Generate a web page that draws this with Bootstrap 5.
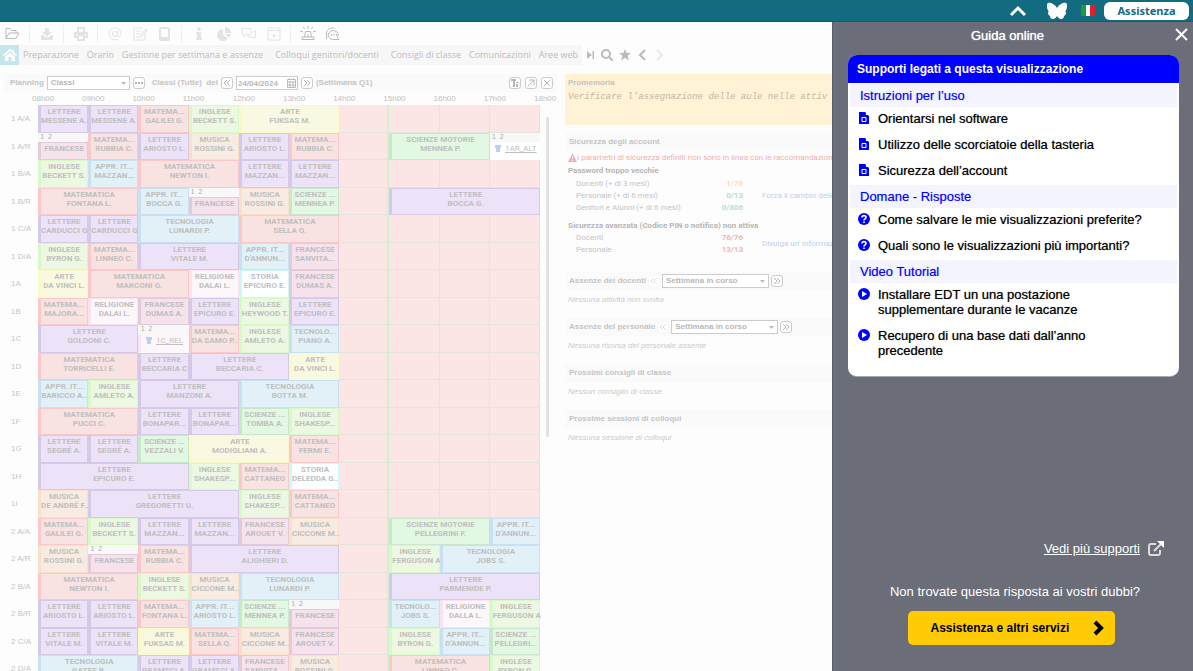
<!DOCTYPE html>
<html lang="it">
<head>
<meta charset="utf-8">
<meta name="viewport" content="width=device-width, initial-scale=1">
<title>EDT - Planning classi</title>
<link href="https://cdn.jsdelivr.net/npm/bootstrap@5.3.0/dist/css/bootstrap.min.css" rel="stylesheet">
<style>
body{font-family:"Liberation Sans",Arial,sans-serif;font-size:8px;line-height:12px;color:#c4c4c4;background:#fdfdfd}
svg{display:block;flex:none}
button,select,input{font:inherit;color:inherit}
.topbar{height:22px;background:#136b80;border-bottom:1px solid #0d6074;color:#fff}
.topbar button{padding:0;border:0;background:none}
.topbar .fold{margin-right:20px}
.topbar .help-btn{width:85px;height:18px;border-radius:6px;background:#fff;color:#136b80;font:bold 11px/16px "Noto Sans","Open Sans",sans-serif}
.workspace{min-width:0}
.toolbar{height:23px;gap:8px;color:#e3e3e3}
.toolbar button{border:0;background:none;padding:0;width:17px;color:inherit;display:flex;justify-content:center}
.toolbar .on{color:#bbb}
.toolbar hr{width:1px;height:18px;margin:0;border:0;background:#eee;opacity:1}
.menu{height:20px;font:9px/20px "Open Sans","Noto Sans",sans-serif}
.menu a{color:#bcbcbc;text-decoration:none;white-space:nowrap}
.menu .tabs{background:#f7f7f7;padding:0 4px;gap:8px}
.menu .wide{margin-right:4px}
.menu .home{width:19px;background:#c5e6ed;color:#fff}
.menu .tools{gap:6px;padding-left:5px}
.menu button{border:0;background:none;padding:0;color:#bbb}
.menu .off{color:#e8e8e8}
.content-area{padding-top:9px}
.planning{flex:565 1 0;min-width:0}
.board{flex:267 1 0;min-width:0;white-space:nowrap}
.bar{height:18px;gap:2px;background:#fafafa;font-weight:bold}
.planning .bar{padding-left:6px;gap:3px}
.bar select,.bar input{height:14px;border:1px solid #ccc;border-radius:0;background:#fff;padding:0 3px;font-weight:bold;color:#b8b8b8;appearance:none;outline:0}
.pick{position:relative;width:107px}
.pick.small-pick{width:83px}
.pick select{width:100%;display:block}
.pick svg{position:absolute;right:4px;top:6px;pointer-events:none}
.date{position:relative;width:62px}
.date input{width:100%;display:block;padding:0 1px}
.date svg{position:absolute;right:2px;top:2px}
.sq{width:12px;height:12px;border:1px solid #ccc!important;border-radius:3px;background:#fff;padding:0;color:#b5b5b5;display:flex;align-items:center;justify-content:center;flex:none}
.ghost{border-color:#f7f7f7!important;color:#ddd}
/* timetable */
.timetable{table-layout:fixed;border-collapse:separate;border-spacing:0;width:100%}
.timetable th,.timetable td{padding:0;font-weight:normal}
.timetable thead th{height:13px;line-height:13px;white-space:nowrap;overflow:visible}
.timetable thead span{margin-left:-6px;color:#c0c0c0}
.timetable tbody tr{height:28px}
.timetable tbody tr:nth-child(even){height:27px}
.timetable tbody th{padding-left:11px;color:#c6c6c6;vertical-align:middle}
.free{background:#fbe5e5;border-right:1px solid #e3e5dc;border-bottom:1px solid #e3e5dc}
.free.edge{border-right:2px solid #cff3cf}
.lesson{position:relative;vertical-align:top}
.slot{position:absolute;inset:0;border:1px solid var(--l);border-left:3px solid var(--l);background:var(--b);font:bold 8px/9px Roboto,sans-serif;color:#bfbfbf;text-align:center;white-space:nowrap;padding-top:1px}
.slot.grp{top:9px}
.slot.cls{font-weight:normal;border-color:transparent;border-left-color:var(--l);text-decoration:underline}
.parts{height:9px;background:#f8f8f8;font:7px/9px "DejaVu Sans",sans-serif;color:#b0b0b0;padding-left:2px}
.parts i{font-style:normal;padding-right:1px}
.lett{--b:#ece3f8;--l:#d4cae7}.mate{--b:#f8e2e2;--l:#fac8c8}.ingl{--b:#edf8e2;--l:#d9f8c8}
.arte{--b:#f9f9e2;--l:#fafac8}.fran{--b:#f6e2ec;--l:#e3cad8}.musi{--b:#f8ece2;--l:#fae0c8}
.tecn{--b:#e2f0f8;--l:#c8e0f0}.scie{--b:#e2f8e2;--l:#cae6cc}.reli{--b:#fdf7fb;--l:#fae2f0}
.stor{--b:#fcffff;--l:#cdf8f8}.altr,.\+alt{--b:#fff;--l:#fff}
.gutter{vertical-align:top;padding:12px 0 0 6px!important}
.thumb{width:3px;height:320px;background:#e2e2e2;border-radius:2px}
/* dashboard */
.memo{height:51px;background:#fff2d5;padding:2px 0 0 3px}
.memo p{font:italic 9px/14px "Liberation Mono",monospace;color:#bfb8a6}
.memo h2,.bar h2{font-size:8px;line-height:14px;font-weight:bold;margin:0}
.board .note{font-style:italic;line-height:12px;margin:4px 0 12px;padding-left:3px;color:#cbcbcb}
.warn{color:#f0aeb0;line-height:13px;font-family:Roboto,sans-serif;padding-left:3px}
.sec{width:100%;table-layout:fixed;border-collapse:collapse;margin-left:3px}
.sec th,.sec td{padding:0;line-height:12px;height:12px;font-weight:normal;font-family:Roboto,sans-serif}
.sec .cap-row th{font-weight:bold;color:#b5b5b5;height:14px}
.sec .cap-row .next{padding-top:6px}
.sec .act{padding-left:19px}
.sec a{color:#bccdf3;text-decoration:none}
.sec .num{text-align:right;font-weight:bold;color:#f0b4b4}
.sec .mid{color:#fbdcae}
.sec .ok{color:#b9e0cf}
/* guide */
.guide{flex:0 0 361px;background:#6b6e78;border-left:1px solid #5c5f70;color:#fff;font-size:13px;line-height:15px}
.guide h1{font-size:13px;line-height:15px;margin:0;padding:6px 11px 0 0;text-shadow:0 0 1px #fff}
.guide .closer{position:absolute;right:5px;top:6px;border:0;background:none;padding:0;color:#fff}
.guide .panel-card{margin:12px 14px 0 15px;padding-bottom:11px;background:#fff;border-radius:9px;overflow:hidden;border-bottom:1px solid #aaa;color:#000}
.guide h2{background:#00f;color:#fff;font-size:12px;font-weight:bold;line-height:28px;margin:0 0 1px;padding-left:9px}
.guide h3{background:#f4f4ff;color:#00f;font-size:13px;line-height:23px;margin:0 2px;padding-left:10px;text-shadow:0 0 1px #99f}
.guide li{padding:4px 0 7px 10px;gap:8px}
.guide li a{color:#000;text-decoration:none;text-shadow:0 0 1px #777}
.guide li svg{color:#00f;margin-top:1px}
.guide .all{padding-right:29px}
.guide .more{color:#fff}
.guide .foot{padding:0 4px 26px 0}
.guide .cta{width:207px;height:34px;border:0;border-radius:5px;background:#ffcb05;color:#000;font-size:12px;font-weight:bold;padding:0 10px 0 23px}
</style>
</head>
<body class="vh-100 d-flex flex-column overflow-hidden">

<header class="topbar d-flex align-items-center justify-content-end flex-shrink-0 pe-1">
  <button aria-label="Riduci" class="fold"><svg width="16" height="12" viewBox="0 0 16 12" fill="none" stroke="currentColor" stroke-width="3"><path d="M1 10l7-7 7 7"/></svg></button>
  <button aria-label="Bluesky"><svg width="22" height="18" viewBox="0 0 22 18" fill="currentColor"><path d="M11 6C9 2 4 0 2 1 0 2 1 8 3 10c-2 0-1 3 1 4 0 3 4 5 7 0 3 5 7 3 7 0 2-1 3-4 1-4 2-2 3-8 1-9-2-1-7 1-9 5z"/></svg></button>
  <button aria-label="Italiano" class="mx-2 ps-1"><svg width="16" height="11" viewBox="0 0 16 11"><path fill="#fff" d="M1 0h14v11H1z"/><path fill="#1c9a3c" d="M1 0h5v11H1z"/><path fill="#dd2030" d="M10 0h5v11h-5z"/></svg></button>
  <button class="help-btn">Assistenza</button>
</header>

<div class="d-flex flex-fill overflow-hidden">
<main class="workspace flex-fill overflow-hidden d-flex flex-column">

  <div class="toolbar d-flex align-items-center flex-shrink-0 ps-1">
    <button class="on" aria-label="Apri"><svg width="15" height="13" viewBox="0 0 15 13" fill="none" stroke="currentColor"><path d="M1 11V1.500h4l1.500 2H11V6M1 11.500L4 6h10l-3 5.500z"/></svg></button>
    <hr>
    <button aria-label="Importa"><svg width="16" height="14" viewBox="0 0 16 14" fill="currentColor"><path d="M6 1h4v4h3L8 9.500 3 5h3zM2 8h2l2 2h4l2-2h2v5H2z"/></svg></button>
    <hr>
    <button aria-label="Stampa"><svg width="14" height="14" viewBox="0 0 14 14" fill="none" stroke="currentColor" stroke-width="2"><path d="M4 5V1h6v4M3 10H1V6h12v4h-2M4 8h6v5H4z"/></svg></button>
    <hr>
    <button aria-label="E-mail"><svg width="16" height="16" viewBox="0 0 16 16" fill="none" stroke="currentColor"><circle cx="8" cy="8" r="2.500"/><path d="M10.500 5v4.500c0 2 3.500 1 3.500-2A6 6 0 1 0 11 13"/></svg></button>
    <button aria-label="Lettere"><svg width="16" height="14" viewBox="0 0 16 14" fill="none" stroke="currentColor"><path d="M13 6v7H2V1h8M4 4h5M4 7h4M4 10h6M9 8l5-6 1 1-5 6z"/></svg></button>
    <button aria-label="SMS"><svg width="11" height="14" viewBox="0 0 11 14" fill="none" stroke="currentColor" stroke-width="2"><rect x="1" y="1" width="9" height="12" rx="1"/><path d="M1 11h9"/></svg></button>
    <hr>
    <button aria-label="Informazioni"><svg width="8" height="14" viewBox="0 0 8 14" fill="currentColor"><circle cx="4" cy="2" r="2"/><path d="M1 5h5v6h1v2H1v-2h1V7H1z"/></svg></button>
    <button aria-label="Statistiche"><svg width="14" height="14" viewBox="0 0 14 14" fill="currentColor"><path d="M6 2v6l5 3.500A6 6 0 1 1 6 2zM8 0a6 6 0 0 1 6 6H8zM8 7h6l-2 4z"/></svg></button>
    <button aria-label="Messaggi"><svg width="16" height="14" viewBox="0 0 16 14" fill="none" stroke="currentColor"><path d="M1 1.500h9v6H5l-2 2v-2H1zM12 4h2.500v6H13v2l-2-2H7V8"/></svg></button>
    <button aria-label="Agenda"><svg width="14" height="14" viewBox="0 0 14 14" fill="none" stroke="currentColor"><path d="M1 1h12v12H1zM1 3.500h12"/><path d="M7 7v3" stroke-width="2"/></svg></button>
    <hr>
    <button class="on" aria-label="Allarme"><svg width="16" height="15" viewBox="0 0 16 15" fill="none" stroke="currentColor"><path d="M4.500 11l1-5.500h5l1 5.500M2 11h12v2.500H2zM8 8v3M8 0v3M3 1l2 2M13 1l-2 2M0 5l3 1M16 5l-3 1"/></svg></button>
    <button class="on" aria-label="Discussioni"><svg width="16" height="14" viewBox="0 0 16 14" fill="none" stroke="currentColor"><path d="M14 12.500l-1.500-2A5 4.500 0 1 0 9 12.500zM1.500 12V6A6 5 0 0 1 10 1.500"/><path d="M6 8h1M8.500 8h1M11 8h1" stroke-width="2"/></svg></button>
  </div>

  <nav class="menu d-flex align-items-center flex-shrink-0">
    <a href="#" class="home h-100 d-flex align-items-center justify-content-center flex-shrink-0" aria-label="Home"><svg width="14" height="12" viewBox="0 0 14 12" fill="currentColor"><path d="M7 0L0 6l1 1 6-5 6 5 1-1-3-2.500V1H9.500v1zM2 7.500L7 3.500l5 4V12H8.500V8h-3v4H2z"/></svg></a>
    <div class="tabs d-flex h-100">
      <a href="#">Preparazione</a><a href="#">Orario</a><a href="#" class="wide">Gestione per settimana e assenze</a><a href="#" class="wide">Colloqui genitori/docenti</a><a href="#">Consigli di classe</a><a href="#">Comunicazioni</a><a href="#">Aree web</a>
    </div>
    <div class="tools d-flex align-items-center">
    <button aria-label="Ultimo"><svg width="8" height="8" viewBox="0 0 8 8" fill="currentColor"><path d="M0 0l5 4-5 4zM5.500 0H7v8H5.500z"/></svg></button>
    <button aria-label="Cerca"><svg width="12" height="12" viewBox="0 0 12 12" fill="none" stroke="currentColor" stroke-width="2"><circle cx="5" cy="5" r="4"/><path d="M8 8l4 4"/></svg></button>
    <button aria-label="Preferiti"><svg width="12" height="12" viewBox="0 0 12 12" fill="currentColor"><path d="M6 0l1.700 4H12L8.600 6.800 10 11.500 6 8.700 2 11.500l1.400-4.700L0 4h4.300z"/></svg></button>
    <button aria-label="Indietro"><svg width="11" height="12" viewBox="0 0 11 12" fill="none" stroke="currentColor" stroke-width="2"><path d="M8 1L3 6l5 5"/></svg></button>
    <button class="off" aria-label="Avanti"><svg width="11" height="12" viewBox="0 0 11 12" fill="none" stroke="currentColor" stroke-width="2"><path d="M3 1l5 5-5 5"/></svg></button>
    </div>
  </nav>

  <div class="content-area d-flex flex-fill overflow-hidden">
    <section class="planning overflow-hidden">
      <div class="bar d-flex align-items-center ms-1 me-2 text-nowrap">
        <label for="vista">Planning</label>
        <span class="pick small-pick"><select id="vista"><option>Classi</option></select><svg width="5" height="3" viewBox="0 0 5 3" fill="#bbb"><path d="M0 0h5L2.500 3z"/></svg></span>
        <button class="sq" aria-label="Altro"><svg width="8" height="2" viewBox="0 0 8 2" fill="currentColor"><path d="M0 0h2v2H0zM3 0h2v2H3zM6 0h2v2H6z"/></svg></button>
        <label for="giorno" class="ps-1">Classi (Tutte)&nbsp; del</label>
        <button class="sq" aria-label="Precedente"><svg width="8" height="6" viewBox="0 0 8 6" fill="none" stroke="currentColor"><path d="M4 0L1 3l3 3M7 0L4 3l3 3"/></svg></button>
        <span class="date"><input id="giorno" value="24/04/2024"><svg width="9" height="10" viewBox="0 0 9 10" fill="none" stroke="#bbb"><path d="M.5 1.500h8v8h-8zM0 4h9M0 7h9M3 3v6M6 3v6M2.500 0v2M6.500 0v2"/></svg></span>
        <button class="sq" aria-label="Successivo"><svg width="8" height="6" viewBox="0 0 8 6" fill="none" stroke="currentColor"><path d="M1 0l3 3-3 3M4 0l3 3-3 3"/></svg></button>
        <span>(Settimana Q1)</span>
        <span class="ms-auto d-flex gap-1 me-1">
          <button class="sq" aria-label="Filtro"><svg width="8" height="8" viewBox="0 0 8 8" fill="currentColor"><path d="M0 0h5v2H4v6H2V2H0zM5 3h3v1H5zM5 5h2v3H5z"/></svg></button>
          <button class="sq" aria-label="Ingrandisci"><svg width="8" height="8" viewBox="0 0 8 8" fill="none" stroke="currentColor"><path d="M1 7l6-6M2 1h5v5"/></svg></button>
          <button class="sq" aria-label="Chiudi"><svg width="8" height="8" viewBox="0 0 8 8" fill="none" stroke="currentColor"><path d="M1 1l6 6M7 1L1 7"/></svg></button>
        </span>
      </div>
      <div class="pe-2"><table class="timetable">
        <colgroup><col style="width:38px"><col span="10"><col style="width:17px"></colgroup>
        <thead><tr id="hours"><th></th></tr></thead>
        <tbody id="rows"></tbody>
      </table></div>
    </section>

    <section class="board overflow-hidden">
      <div class="memo overflow-hidden"><h2>Promemoria</h2><p class="mb-0">Verificare l'assegnazione delle aule nelle attiv</p></div>
      <div class="bar d-flex align-items-center ps-1 mt-2"><h2>Sicurezza degli account</h2></div>
      <div class="warn d-flex align-items-center"><svg width="9" height="9" viewBox="0 0 9 9"><path fill="#f3b0b0" d="M4.500 0L9 9H0z"/><path stroke="#fff" d="M4.500 3v3M4.500 7v1"/></svg>I parametri di sicurezza definiti non sono in linea con le raccomandazioni ACN</div>
      <table class="sec">
        <colgroup><col style="width:8px"><col style="width:120px"><col style="width:47px"><col></colgroup>
        <tbody>
          <tr class="cap-row"><th colspan="4">Password troppo vecchie</th></tr>
          <tr><td></td><th>Docenti (+ di 3 mesi)</th><td class="num mid">1/76</td><td rowspan="3" class="act"><a href="#">Forza il cambio delle</a></td></tr>
          <tr><td></td><th>Personale (+ di 6 mesi)</th><td class="num ok">0/13</td></tr>
          <tr><td></td><th>Genitori e Alunni (+ di 6 mesi)</th><td class="num ok">0/806</td></tr>
        </tbody>
        <tbody>
          <tr class="cap-row"><th colspan="4" class="next">Sicurezza avanzata (Codice PIN o notifica) non attiva</th></tr>
          <tr><td></td><th>Docenti</th><td class="num">76/76</td><td rowspan="2" class="act"><a href="#">Divulga un' informazi</a></td></tr>
          <tr><td></td><th>Personale</th><td class="num">13/13</td></tr>
        </tbody>
      </table>
      <div class="bar d-flex align-items-center ps-1 mt-3">
        <label for="doc">Assenze dei docenti</label>
        <button class="sq ghost" aria-label="Precedente"><svg width="8" height="6" viewBox="0 0 8 6" fill="none" stroke="currentColor"><path d="M4 0L1 3l3 3M7 0L4 3l3 3"/></svg></button>
        <span class="pick"><select id="doc"><option>Settimana in corso</option></select><svg width="5" height="3" viewBox="0 0 5 3" fill="#bbb"><path d="M0 0h5L2.500 3z"/></svg></span>
        <button class="sq" aria-label="Successivo"><svg width="8" height="6" viewBox="0 0 8 6" fill="none" stroke="currentColor"><path d="M1 0l3 3-3 3M4 0l3 3-3 3"/></svg></button>
      </div>
      <p class="note">Nessuna attività non svolta</p>
      <div class="bar d-flex align-items-center ps-1">
        <label for="per">Assenze del personale</label>
        <button class="sq ghost" aria-label="Precedente"><svg width="8" height="6" viewBox="0 0 8 6" fill="none" stroke="currentColor"><path d="M4 0L1 3l3 3M7 0L4 3l3 3"/></svg></button>
        <span class="pick"><select id="per"><option>Settimana in corso</option></select><svg width="5" height="3" viewBox="0 0 5 3" fill="#bbb"><path d="M0 0h5L2.500 3z"/></svg></span>
        <button class="sq" aria-label="Successivo"><svg width="8" height="6" viewBox="0 0 8 6" fill="none" stroke="currentColor"><path d="M1 0l3 3-3 3M4 0l3 3-3 3"/></svg></button>
      </div>
      <p class="note">Nessuna risorsa del personale assente</p>
      <div class="bar d-flex align-items-center ps-1"><h2>Prossimi consigli di classe</h2></div>
      <p class="note">Nessun consiglio di classe</p>
      <div class="bar d-flex align-items-center ps-1"><h2>Prossime sessioni di colloqui</h2></div>
      <p class="note">Nessuna sessione di colloqui</p>
    </section>
  </div>
</main>

<aside class="guide d-flex flex-column position-relative">
  <h1 class="text-center fw-normal">Guida online</h1>
  <button class="closer" aria-label="Chiudi"><svg width="13" height="13" viewBox="0 0 13 13" stroke="currentColor" stroke-width="2"><path d="M1 1l11 11M12 1L1 12"/></svg></button>
  <div class="panel-card">
    <h2>Supporti legati a questa visualizzazione</h2>
    <h3 class="fw-normal">Istruzioni per l’uso</h3>
    <ul class="list-unstyled mb-0" data-icon="doc">
      <li class="d-flex"><a href="#">Orientarsi nel software</a></li>
      <li class="d-flex"><a href="#">Utilizzo delle scorciatoie della tasteria</a></li>
      <li class="d-flex"><a href="#">Sicurezza dell’account</a></li>
    </ul>
    <h3 class="fw-normal">Domane - Risposte</h3>
    <ul class="list-unstyled mb-0" data-icon="ask">
      <li class="d-flex"><a href="#">Come salvare le mie visualizzazioni preferite?</a></li>
      <li class="d-flex"><a href="#">Quali sono le visualizzazioni più importanti?</a></li>
    </ul>
    <h3 class="fw-normal">Video Tutorial</h3>
    <ul class="list-unstyled mb-0" data-icon="play">
      <li class="d-flex"><a href="#">Installare EDT un una postazione<br>supplementare durante le vacanze</a></li>
      <li class="d-flex"><a href="#">Recupero di una base dati dall’anno<br>precedente</a></li>
    </ul>
  </div>
  <div class="mt-auto">
    <div class="all d-flex justify-content-end align-items-center gap-2 mb-4 pb-1">
      <a href="#" class="more">Vedi più supporti</a>
      <svg width="16" height="15" viewBox="0 0 16 15" fill="none" stroke="#ddd" stroke-width="2"><path d="M8 3H3a2 2 0 0 0-2 2v7a2 2 0 0 0 2 2h7a2 2 0 0 0 2-2V9M6 10l8-8"/><path d="M9 0h7v7z" fill="#fff" stroke="none"/></svg>
    </div>
    <p class="text-center mb-2 pb-1 ps-1">Non trovate questa risposta ai vostri dubbi?</p>
    <div class="foot d-flex justify-content-center"><button class="cta d-flex align-items-center justify-content-between">Assistenza e altri servizi
      <svg width="12" height="16" viewBox="0 0 12 16" fill="none" stroke="#000" stroke-width="4"><path d="M2 2l6 6-6 6"/></svg></button></div>
  </div>
</aside>
</div>

<script src="https://cdn.jsdelivr.net/npm/bootstrap@5.3.0/dist/js/bootstrap.bundle.min.js"></script>
<script>
// Each lesson is SUBJECT/TEACHER/hours; "-" is a free hour; "+" marks a class split in groups.
const plan = {
"1 A/A":"LETTERE/MESSENE A../1|LETTERE/MESSENE A../1|MATEMA.../GALILEI G./1|INGLESE/BECKETT S./1|ARTE/FUKSAS M./2|-|-|-|-",
"1 A/R":"+FRANCESE//1|MATEMA.../RUBBIA C./1|LETTERE/ARIOSTO L./1|MUSICA/ROSSINI G./1|LETTERE/ARIOSTO L./1|MATEMA.../RUBBIA C./1|-|SCIENZE MOTORIE/MENNEA P./2|+ALTR:1AR_ALT//1",
"1 B/A":"INGLESE/BECKETT S./1|APPR. IT.../MAZZAN.../1|MATEMATICA/NEWTON I./2|LETTERE/MAZZAN.../1|LETTERE/MAZZAN.../1|-|-|-|-",
"1 B/R":"MATEMATICA/FONTANA L./2|APPR. IT.../BOCCA G./1|+FRANCESE//1|MUSICA/ROSSINI G./1|SCIENZE .../MENNEA P./1|-|LETTERE/BOCCA G./3",
"1 C/A":"LETTERE/CARDUCCI G/1|LETTERE/CARDUCCI G/1|TECNOLOGIA/LUNARDI P./2|MATEMATICA/SELLA Q./2|-|-|-|-",
"1 D/A":"INGLESE/BYRON G./1|MATEMA.../LINNEO C./1|LETTERE/VITALE M./2|APPR. IT.../D'ANNUN.../1|FRANCESE/SANVITA.../1|-|-|-|-",
"1A":"ARTE/DA VINCI L./1|MATEMATICA/MARCONI G./2|RELIGIONE/DALAI L./1|STORIA/EPICURO E./1|FRANCESE/DUMAS A./1|-|-|-|-",
"1B":"MATEMA.../MAJORA.../1|RELIGIONE/DALAI L./1|FRANCESE/DUMAS A./1|LETTERE/EPICURO E./1|INGLESE/HEYWOOD T./1|LETTERE/EPICURO E./1|-|-|-|-",
"1C":"LETTERE/GOLDONI C./2|+RELI:1C_REL//1|MATEMA.../DA SAMO P../1|INGLESE/AMLETO A./1|TECNOLO.../PIANO A./1|-|-|-|-",
"1D":"MATEMATICA/TORRICELLI E./2|LETTERE/BECCARIA C/1|LETTERE/BECCARIA C./2|ARTE/DA VINCI L./1|-|-|-|-",
"1E":"APPR. IT.../BARICCO A../1|INGLESE/AMLETO A./1|LETTERE/MANZONI A./2|TECNOLOGIA/BOTTA M./2|-|-|-|-",
"1F":"MATEMATICA/PUCCI C./2|LETTERE/BONAPAR.../1|LETTERE/BONAPAR.../1|SCIENZE .../TOMBA A./1|INGLESE/SHAKESP.../1|-|-|-|-",
"1G":"LETTERE/SEGRÉ A./1|LETTERE/SEGRÉ A./1|SCIENZE .../VEZZALI V./1|ARTE/MODIGLIANI A./2|MATEMA.../FERMI E./1|-|-|-|-",
"1H":"LETTERE/EPICURO E./3|INGLESE/SHAKESP.../1|MATEMA.../CATTANEO/1|STORIA/DELEDDA G../1|-|-|-|-",
"1I":"MUSICA/DE ANDRÉ F../1|LETTERE/GREGORETTI U./3|INGLESE/SHAKESP.../1|MATEMA.../CATTANEO/1|-|-|-|-",
"2 A/A":"MATEMA.../GALILEI G./1|INGLESE/BECKETT S./1|LETTERE/MAZZAN.../1|LETTERE/MAZZAN.../1|FRANCESE/AROUET V./1|MUSICA/CICCONE M../1|-|SCIENZE MOTORIE/PELLEGRINI F./2|APPR. IT.../D'ANNUN.../1",
"2 A/R":"MUSICA/ROSSINI G./1|+FRANCESE//1|MATEMA.../RUBBIA C./1|LETTERE/ALIGHIERI D./3|-|INGLESE/FERGUSON A/1|TECNOLOGIA/JOBS S./2",
"2 B/A":"MATEMATICA/NEWTON I./2|INGLESE/BECKETT S./1|MUSICA/CICCONE M../1|TECNOLOGIA/LUNARDI P./2|-|LETTERE/PARMENIDE P./3",
"2 B/R":"LETTERE/ARIOSTO L./1|LETTERE/ARIOSTO L./1|MATEMA.../FONTANA L./1|APPR. IT.../ARIOSTO L./1|SCIENZE .../MENNEA P./1|+FRANCESE//1|-|TECNOLO.../JOBS S./1|RELIGIONE/DALLA L./1|INGLESE/FERGUSON A/1",
"2 C/A":"LETTERE/VITALE M./1|LETTERE/VITALE M./1|ARTE/FUKSAS M./1|MATEMA.../SELLA Q./1|MUSICA/CICCONE M../1|FRANCESE/AROUET V./1|-|INGLESE/BYRON G./1|APPR. IT.../D'ANNUN.../1|SCIENZE .../PELLEGRI.../1",
"2 D/A":"TECNOLOGIA/GATES B./2|LETTERE/GRAMSCI A./1|LETTERE/GRAMSCI A./1|FRANCESE/SANVITA.../1|MUSICA/ROSSINI G./1|-|MATEMATICA/LINNEO C./2|INGLESE/BYRON G./1"
};
for (let h = 8; h <= 18; h++)
  hours.insertAdjacentHTML('beforeend', `<th scope="col"><span>${String(h).padStart(2,'0')}h00</span></th>`);
const shirt = '<svg class="d-inline-block me-1" width="6" height="7" viewBox="0 0 6 7" fill="#b9d0f2"><path d="M0 0h6v3H5v4H1V3H0z"/></svg>';
Object.entries(plan).forEach(([name, line], r, all) => {
  let col = 0, html = `<th scope="row">${name}</th>`;
  for (const item of line.split('|')) {
    if (item === '-') { html += `<td class="free${col === 5 || col === 6 ? ' edge' : ''}"></td>`; col++; continue; }
    const split = item[0] === '+', cls = item.includes(':');
    let [subject, teacher, span] = item.replace('+', '').split('/');
    const kind = subject.slice(0, 4).toLowerCase().replace('appr', 'tecn');
    if (cls) subject = shirt + subject.split(':')[1];
    html += `<td class="lesson" colspan="${span}">${split ? '<div class="parts"><i>1</i> <i>2</i></div>' : ''}<div class="slot ${kind}${split ? ' grp' : ''}${cls ? ' cls' : ''}">${subject}${teacher ? '<br>' + teacher : ''}</div></td>`;
    col += +span;
  }
  if (r === 0) html += `<td class="gutter" rowspan="${all.length}"><div class="thumb"></div></td>`;
  rows.insertAdjacentHTML('beforeend', `<tr>${html}</tr>`);
});
const icons = {
  doc:'<svg width="12" height="12" viewBox="0 0 12 12"><path fill="currentColor" d="M1 0h6l4 4v8H1z"/><path fill="#fff" d="M8 0l3 3H8z"/><path stroke="#fff" fill="none" d="M4 5.500h4v4H4z"/></svg>',
  ask:'<svg width="12" height="12" viewBox="0 0 12 12"><circle cx="6" cy="6" r="6" fill="currentColor"/><path stroke="#fff" stroke-width="1.600" fill="none" d="M4 4.500C4 2 8 2 8 4.500 8 6 6 5.700 6 7.500M6 8.500v1.500"/></svg>',
  play:'<svg width="12" height="12" viewBox="0 0 12 12"><circle cx="6" cy="6" r="6" fill="currentColor"/><path fill="#fff" d="M4 3l5 3-5 3z"/></svg>'
};
document.querySelectorAll('[data-icon]').forEach(ul => ul.querySelectorAll('li').forEach(li => li.insertAdjacentHTML('afterbegin', icons[ul.dataset.icon])));
</script>
</body>
</html>
